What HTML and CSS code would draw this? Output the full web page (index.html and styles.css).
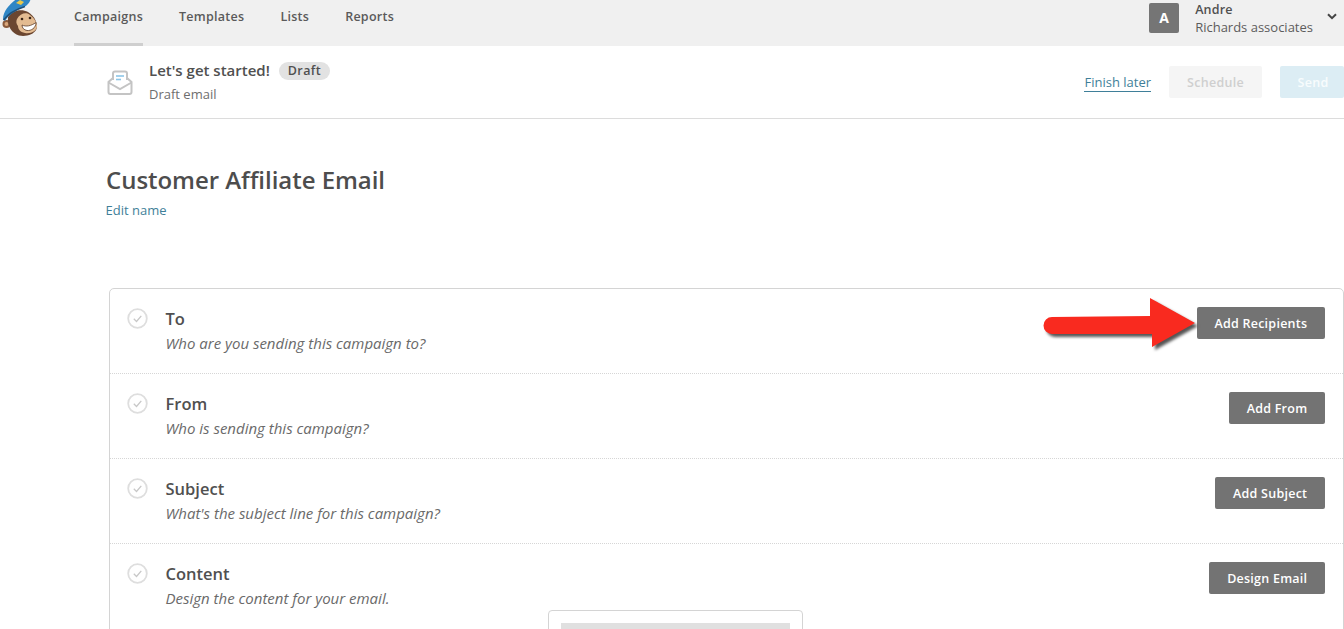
FILE: index.html
```html
<!DOCTYPE html>
<html lang="en">
<head>
<meta charset="utf-8">
<title>Customer Affiliate Email</title>
<link rel="stylesheet" href="styles.css">
</head>
<body>
<header class="topnav">
  <svg class="logo" width="40" height="38" viewBox="0 0 40 38">
    <circle cx="6.500" cy="24" r="4" fill="#8a5a3c"/>
    <circle cx="6.500" cy="24" r="2" fill="#d9a77c"/>
    <path d="M8 17C11 11 21 8 28 12C35 16 38 24 36.500 29C34 35 25 37 19 35.500C12 33.500 7 26 8 17Z" fill="#6b4630"/>
    <path d="M17 19C20 13 27 12 30 15C33 17 37 22 37 26C37 31 31 34 25 33C20 32 18 29 18 26C16 24 16 21 17 19Z" fill="#e3bb91"/>
    <path d="M22 25C26 27 31 26 36 22.500C36 28 31 31 27 30.500C24 30 22 28 22 25Z" fill="#fff" stroke="#5a3a26" stroke-width=".8"/>
    <circle cx="22" cy="19" r="1.300" fill="#3b2618"/><circle cx="30" cy="18" r="1.300" fill="#3b2618"/>
    <path d="M3 19C3 10 12 2 18 -2L31 -2C30 2 28 5 24 7C17 10 9 14 5 21Z" fill="#2f86c5"/>
    <path d="M3.500 20C8 14 17 9 25 6.500" fill="none" stroke="#1f4f78" stroke-width="1.500"/>
    <path d="M16 3l4-3 4 2-3 3z" fill="#e9c84a"/>
  </svg>
  <nav class="navlinks">
    <a class="navlink active">Campaigns</a>
    <a class="navlink">Templates</a>
    <a class="navlink">Lists</a>
    <a class="navlink">Reports</a>
  </nav>
  <div class="account">
    <div class="avatar">A</div>
    <div class="account-text">
      <div class="account-name">Andre</div>
      <div class="account-org">Richards associates</div>
    </div>
    <svg class="chevron" width="10" height="7" viewBox="0 0 10 7"><path d="M1 1.200L5 5.200L9 1.200" fill="none" stroke="#444" stroke-width="2"/></svg>
  </div>
</header>

<section class="subhead">
  <svg class="mail-icon" width="26" height="26" viewBox="0 0 26 26">
    <path d="M6 10V3.500A2 2 0 0 1 8 1.500H18A2 2 0 0 1 20 3.500V10" fill="#fff" stroke="#c4c4c4" stroke-width="2"/>
    <path d="M9 6H17" stroke="#8cc6e8" stroke-width="1.600"/>
    <path d="M9 9.500H14" stroke="#8cc6e8" stroke-width="1.600"/>
    <path d="M6 8L1.500 12V22A2 2 0 0 0 3.500 24H22.500A2 2 0 0 0 24.500 22V12L20 8" fill="none" stroke="#c4c4c4" stroke-width="2"/>
    <path d="M1.500 12.500L13 19L24.500 12.500" fill="none" stroke="#c4c4c4" stroke-width="2"/>
  </svg>
  <div class="subhead-text">
    <div class="subhead-title">
      <span>Let's get started!</span>
      <span class="badge">Draft</span>
    </div>
    <div class="subhead-sub">Draft email</div>
  </div>
  <div class="subhead-actions">
    <a class="finish">Finish later</a>
    <span class="ghost schedule">Schedule</span>
    <span class="ghost send">Send</span>
  </div>
</section>

<main class="main">
  <h1 class="title">Customer Affiliate Email</h1>
  <a class="edit">Edit name</a>

  <div class="card">
    <div class="row">
      <svg class="check" width="21" height="21" viewBox="0 0 21 21"><circle cx="10.500" cy="10.500" r="9.300" fill="none" stroke="#dedede" stroke-width="1.800"/><path d="M6.800 10.800L9.500 13.500L14.300 7.800" fill="none" stroke="#c8c8c8" stroke-width="1.300"/></svg>
      <div class="row-text">
        <div class="row-title">To</div>
        <div class="row-sub">Who are you sending this campaign to?</div>
      </div>
      <button class="btn">Add Recipients</button>
      <svg class="arrow" width="160" height="58" viewBox="0 0 160 58">
        <path class="arrow-body" d="M6 19L104 18V0L149 25L106 49V36L6 36A8.500 8.500 0 0 1 6 19Z"/>
      </svg>
    </div>
    <div class="row">
      <svg class="check" width="21" height="21" viewBox="0 0 21 21"><circle cx="10.500" cy="10.500" r="9.300" fill="none" stroke="#dedede" stroke-width="1.800"/><path d="M6.800 10.800L9.500 13.500L14.300 7.800" fill="none" stroke="#c8c8c8" stroke-width="1.300"/></svg>
      <div class="row-text">
        <div class="row-title">From</div>
        <div class="row-sub">Who is sending this campaign?</div>
      </div>
      <button class="btn">Add From</button>
    </div>
    <div class="row">
      <svg class="check" width="21" height="21" viewBox="0 0 21 21"><circle cx="10.500" cy="10.500" r="9.300" fill="none" stroke="#dedede" stroke-width="1.800"/><path d="M6.800 10.800L9.500 13.500L14.300 7.800" fill="none" stroke="#c8c8c8" stroke-width="1.300"/></svg>
      <div class="row-text">
        <div class="row-title">Subject</div>
        <div class="row-sub">What's the subject line for this campaign?</div>
      </div>
      <button class="btn">Add Subject</button>
    </div>
    <div class="row last">
      <svg class="check" width="21" height="21" viewBox="0 0 21 21"><circle cx="10.500" cy="10.500" r="9.300" fill="none" stroke="#dedede" stroke-width="1.800"/><path d="M6.800 10.800L9.500 13.500L14.300 7.800" fill="none" stroke="#c8c8c8" stroke-width="1.300"/></svg>
      <div class="row-text">
        <div class="row-title">Content</div>
        <div class="row-sub">Design the content for your email.</div>
      </div>
      <button class="btn">Design Email</button>
      <div class="preview"><div class="preview-bar"></div></div>
    </div>
  </div>
</main>
</body>
</html>
```

FILE: styles.css
```css
* { box-sizing: border-box; }
html, body { margin: 0; height: 629px; overflow: hidden; }
body {
  width: 1344px;
  background: #fff;
  font-family: "Open Sans", "Liberation Sans", sans-serif;
  color: #474747;
}

.topnav {
  height: 46px;
  background: #f0f0f0;
  display: flex;
  align-items: flex-start;
  position: relative;
}
.logo { position: absolute; left: 0; top: 0; }
.navlinks { display: flex; gap: 36px; margin-left: 74px; height: 46px; }
.navlink {
  height: 46px;
  padding-top: 8px;
  font-size: 12.500px;
  font-weight: 600;
  line-height: 17px;
  letter-spacing: .27px;
  color: #5a5a5a;
}
.navlink.active { border-bottom: 3px solid #cfcfcf; }

.account { margin-left: auto; display: flex; align-items: flex-start; }
.avatar {
  width: 30px;
  height: 30px;
  margin-top: 3px;
  border-radius: 2px;
  background: #757575;
  color: #fff;
  font-size: 14px;
  font-weight: 700;
  line-height: 30px;
  text-align: center;
}
.account-text { margin-left: 16px; font-size: 13px; line-height: 18px; }
.account-name { margin-top: 1px; color: #505050; font-weight: 600; font-size: 12.500px; line-height: 17px; letter-spacing: .2px; }
.account-org { color: #5c5c5c; }
.chevron { margin: 13px 7px 0 14px; }

.subhead {
  height: 73px;
  border-bottom: 1px solid #dcdcdc;
  display: flex;
  align-items: flex-start;
  padding-left: 107px;
}
.mail-icon { margin-top: 24px; }
.subhead-text { margin-left: 16px; }
.subhead-title {
  margin-top: 14px;
  display: flex;
  align-items: center;
  gap: 9px;
  font-size: 15px;
  font-weight: 600;
  line-height: 21px;
  color: #505050;
}
.badge {
  background: #e2e2e2;
  border-radius: 9px;
  height: 18px;
  padding: 0 9px;
  font-size: 12.500px;
  line-height: 18px;
  letter-spacing: .4px;
}
.subhead-sub { margin-top: 4px; font-size: 13px; line-height: 18px; color: #6e6e6e; }
.subhead-actions { margin-left: auto; margin-top: 20px; display: flex; align-items: center; }
.finish {
  font-size: 13px;
  line-height: 18px;
  color: #3f7f99;
  border-bottom: 1px solid #3f7f99;
  margin-right: 18px;
}
.ghost {
  height: 32px;
  border-radius: 2px;
  font-size: 12.500px;
  font-weight: 600;
  line-height: 33px;
  letter-spacing: .3px;
  text-align: center;
}
.schedule { width: 93px; background: #f5f5f5; color: #cfcfcf; margin-right: 18px; }
.send { width: 64px; padding-left: 2px; background: #dcedf4; color: #f8fcfd; }

.main { padding-left: 106px; }
.title {
  margin: 44px 0 0;
  font-size: 24px;
  font-weight: 600;
  line-height: 33px;
  letter-spacing: -.04px;
  color: #4d4d4d;
}
.edit { display: block; margin: 5px 0 0 -.500px; font-size: 13px; line-height: 18px; color: #3f7f99; }

.card {
  margin: 69px 0 0 3px;
  width: 1235px;
  height: 400px;
  border: 1px solid #d4d4d4;
  border-radius: 5px;
}
.row {
  position: relative;
  height: 85px;
  display: flex;
  align-items: flex-start;
  padding: 18px 18px 0 18px;
  border-bottom: 1px dotted #d6d6d6;
}
.row.last { height: 120px; border-bottom: 0; }
.check { margin-top: 1px; margin-left: -1px; flex: none; }
.row-text { margin-left: 17.500px; }
.row-title { margin-top: 1px; font-size: 16.500px; font-weight: 600; line-height: 22px; color: #505050; }
.row-sub { margin-top: 3px; font-size: 15px; font-style: italic; line-height: 20px; color: #6a6a6a; }
.btn {
  margin-left: auto;
  height: 32px;
  padding: 0 17.700px;
  border: 0;
  border-radius: 2px;
  background: #737373;
  color: #fff;
  font-family: inherit;
  font-size: 12.500px;
  font-weight: 600;
  letter-spacing: .25px;
}
.arrow { position: absolute; left: 935.500px; top: 9px; overflow: visible; }
.arrow-body { fill: #f92a1f; filter: drop-shadow(3px 3px 1.500px #555); }
.preview {
  position: absolute;
  left: 438px;
  top: 66px;
  width: 255px;
  height: 60px;
  background: #fff;
  border: 1px solid #d4d4d4;
  border-radius: 4px;
  padding: 12px 12px 0;
}
.preview-bar { height: 20px; background: #e0e0e0; }
```
